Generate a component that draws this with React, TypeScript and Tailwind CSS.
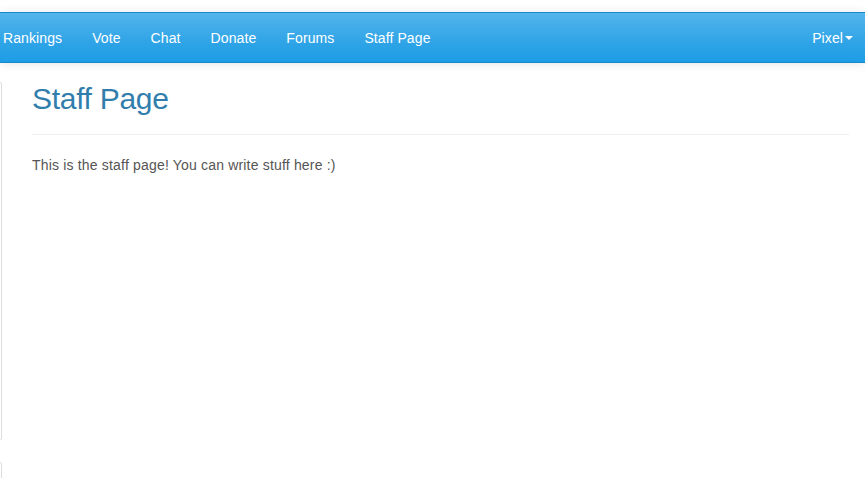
export default function App() {
  const links = ["Rankings", "Vote", "Chat", "Donate", "Forums", "Staff Page"];
  return (
    <div className="h-[478px] bg-white font-['Liberation_Sans',Arial,sans-serif] overflow-hidden">
      <div className="pt-[12px]">
        <nav className="h-[51px] flex items-center justify-between border-y border-[#178acc] bg-[linear-gradient(#54b4eb,#2fa4e7_60%,#1d9ce5)] shadow-[0_1px_10px_rgba(0,0,0,0.1)] text-white text-[14px] leading-[20px] tracking-[0.1px]">
          <ul className="flex ml-[-12px]">
            {links.map((l) => (
              <li key={l} className="px-[15px] py-[15px] whitespace-nowrap">
                {l}
              </li>
            ))}
          </ul>
          <div className="flex items-center pr-[12px]">
            <span>Pixel</span>
            <span className="ml-[2px] inline-block w-0 h-0 border-t-[4px] border-t-white border-x-[4px] border-x-transparent" />
          </div>
        </nav>
      </div>
      <div className="flex pt-[19px]">
        <div className="w-[2px] flex flex-col gap-[22px] shrink-0">
          <div className="h-[358px] border border-l-0 border-[#dddddd] rounded-r-[3px]" />
          <div className="h-[60px] border border-l-0 border-[#dddddd] rounded-r-[3px]" />
        </div>
        <main className="flex-1 pl-[30px] pr-[16px]">
          <div className="pb-[9px] border-b border-[#eeeeee] mb-[20px]">
            <h1 className="text-[30px] leading-[33px] tracking-[-0.3px] text-[#317eac] mb-[10px] font-normal">Staff Page</h1>
          </div>
          <p className="text-[14px] leading-[20px] tracking-[0.18px] text-[#555555]">This is the staff page! You can write stuff here :)</p>
        </main>
      </div>
    </div>
  );
}
